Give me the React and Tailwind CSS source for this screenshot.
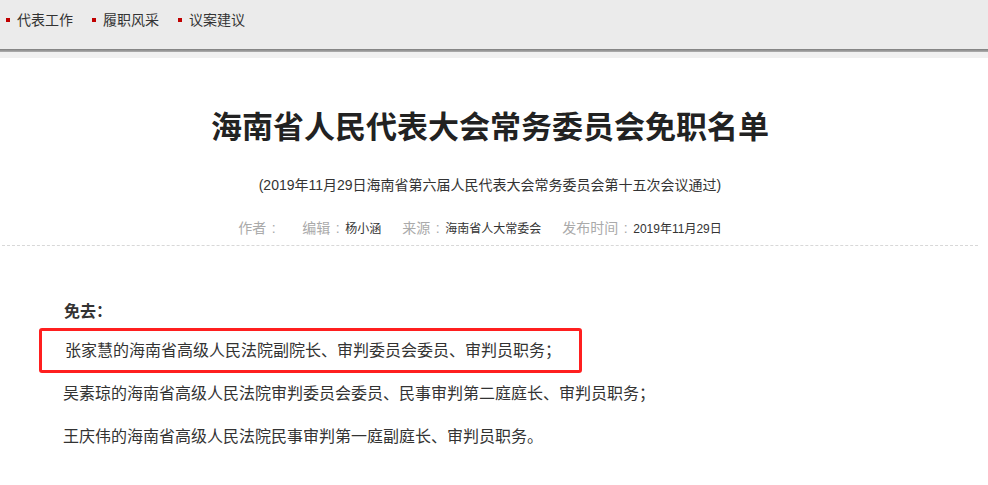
const font = { fontFamily: '"Liberation Sans", "Noto Sans CJK SC", sans-serif' };

const navItems = ["代表工作", "履职风采", "议案建议"];

const meta = [
  { label: "作者", value: "" },
  { label: "编辑", value: "杨小涵" },
  { label: "来源", value: "海南省人大常委会" },
  { label: "发布时间", value: "2019年11月29日" },
];

export default function App() {
  return (
    <div className="w-[988px] h-[485px] overflow-hidden bg-white text-[#333]" style={font}>
      {/* top nav */}
      <div className="h-[49px] bg-[#ebebeb] flex items-start pt-[11px]">
        {navItems.map((item) => (
          <div key={item} className="w-[86px] pl-[6px] flex items-center gap-[7px]">
            <span className="w-[4px] h-[4px] bg-[#c00000]" />
            <span className="text-[14px] leading-[18px] text-[#333]">{item}</span>
          </div>
        ))}
      </div>
      <div className="h-[3px] bg-gradient-to-b from-[#7d7d7d] to-[#b0b0b0]" />
      <div className="h-[6px] bg-[#f0f0f0]" />

      {/* article */}
      <div className="w-[980px]">
        <h1 className="mt-[50px] text-center text-[31px] leading-[40px] font-bold text-[#222]">
          海南省人民代表大会常务委员会免职名单
        </h1>
        <p className="mt-[27px] text-center text-[14px] leading-[20px] text-[#333]">
          (2019年11月29日海南省第六届人民代表大会常务委员会第十五次会议通过)
        </p>
        <div className="mt-[23px] h-[20px] flex items-center justify-center gap-[21px] pr-[20px]">
          {meta.map((m) => (
            <span key={m.label} className="flex items-baseline">
              <span className="text-[14px] text-[#aaa]">{m.label}</span>
              <span className="w-[15px] text-center text-[14px] text-[#aaa]">:</span>
              <span className="text-[12px] text-[#333]">{m.value}</span>
            </span>
          ))}
        </div>
        <div className="mt-[7px] mx-[2px] border-t border-dashed border-[#d8d8d8]" />

        <div className="text-[16px] leading-[24px]">
          <p className="mt-[54px] pl-[64px] font-bold">免去：</p>
          <div className="mt-[4px] ml-[39px] w-[543px] h-[45px] border-[3px] border-[#ff1f1f] rounded-[3px] pl-[23px] flex items-center">
            张家慧的海南省高级人民法院副院长、审判委员会委员、审判员职务；
          </div>
          <p className="mt-[9px] pl-[63px]">
            吴素琼的海南省高级人民法院审判委员会委员、民事审判第二庭庭长、审判员职务；
          </p>
          <p className="mt-[19px] pl-[63px]">
            王庆伟的海南省高级人民法院民事审判第一庭副庭长、审判员职务。
          </p>
        </div>
      </div>
    </div>
  );
}
